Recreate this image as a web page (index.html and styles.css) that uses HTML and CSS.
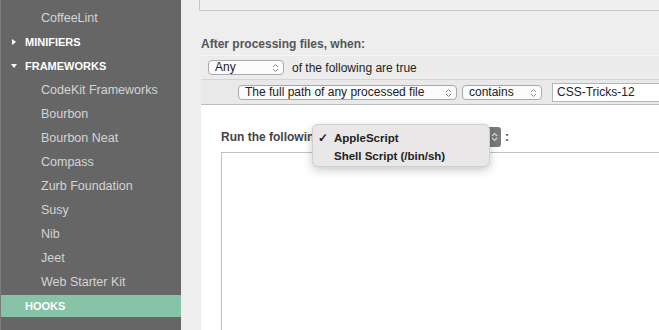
FILE: index.html
```html
<!DOCTYPE html>
<html lang="en">
<head>
    <meta charset="UTF-8">
    <title>CodeKit Hooks</title>
    <link rel="stylesheet" href="styles.css">
</head>
<body>

    <div class="sidebar">
        <div class="item sub">CoffeeLint</div>
        <div class="item head"><span class="arrow right"></span>MINIFIERS</div>
        <div class="item head"><span class="arrow down"></span>FRAMEWORKS</div>
        <div class="item sub">CodeKit Frameworks</div>
        <div class="item sub">Bourbon</div>
        <div class="item sub">Bourbon Neat</div>
        <div class="item sub">Compass</div>
        <div class="item sub">Zurb Foundation</div>
        <div class="item sub">Susy</div>
        <div class="item sub">Nib</div>
        <div class="item sub">Jeet</div>
        <div class="item sub">Web Starter Kit</div>
        <div class="item head active">HOOKS</div>
    </div>

    <div class="main">
        <div class="top-box"></div>

        <div class="section-title">After processing files, when:</div>

        <div class="rules">
            <div class="rule-row first">
                <div class="select sel-any">Any<span class="stepper"><svg width="7" height="10" viewBox="0 0 7 10"><path d="M1 4 L3.5 1.5 L6 4 M1 6 L3.5 8.5 L6 6" fill="none" stroke="#8a8a8a" stroke-width="1"/></svg></span></div>
                <span class="rule-text">of the following are true</span>
            </div>
            <div class="rule-row second">
                <div class="select sel-path">The full path of any processed file<span class="stepper"><svg width="7" height="10" viewBox="0 0 7 10"><path d="M1 4 L3.5 1.5 L6 4 M1 6 L3.5 8.5 L6 6" fill="none" stroke="#8a8a8a" stroke-width="1"/></svg></span></div>
                <div class="select sel-contains">contains<span class="stepper"><svg width="7" height="10" viewBox="0 0 7 10"><path d="M1 4 L3.5 1.5 L6 4 M1 6 L3.5 8.5 L6 6" fill="none" stroke="#8a8a8a" stroke-width="1"/></svg></span></div>
                <div class="text-field">CSS-Tricks-12</div>
            </div>
        </div>

        <div class="script-area">
            <div class="run-line">
                <span class="run-label">Run the following script</span>
                <span class="dark-select"><svg width="7" height="10" viewBox="0 0 7 10"><path d="M1 4 L3.5 1.5 L6 4 M1 6 L3.5 8.5 L6 6" fill="none" stroke="#ddd" stroke-width="1.2"/></svg></span>
                <span class="colon">:</span>
            </div>
            <div class="script-box"></div>

            <div class="popup">
                <div class="popup-item"><span class="check">&#10003;</span>AppleScript</div>
                <div class="popup-item"><span class="check"></span>Shell Script (/bin/sh)</div>
            </div>
        </div>
    </div>

</body>
</html>
```

FILE: styles.css
```css
body {
    margin: 0;
    font-family: "Liberation Sans", Arial, sans-serif;
    display: flex;
    height: 330px;
    overflow: hidden;
    background: #eeeeee;
}
.sidebar {
    width: 180px;
    flex-shrink: 0;
    background: #666666;
    border-left: 1px solid #7c7c7c;
    padding-top: 6px;
}
.item {
    height: 24px;
    display: flex;
    align-items: center;
}
.sub {
    padding-left: 40px;
    font-size: 12.5px;
    color: #d4d4d4;
}
.head {
    padding-left: 24px;
    font-size: 11px;
    font-weight: bold;
    color: #ffffff;
    position: relative;
}
.arrow {
    position: absolute;
    width: 0;
    height: 0;
}
.arrow.right {
    left: 11px;
    border-top: 3px solid transparent;
    border-bottom: 3px solid transparent;
    border-left: 4px solid #ffffff;
}
.arrow.down {
    left: 10px;
    border-left: 3px solid transparent;
    border-right: 3px solid transparent;
    border-top: 4px solid #ffffff;
}
.active {
    background: #86c3a8;
    height: 22px;
    margin-top: 1px;
}
.main {
    flex: 1;
    padding-left: 20px;
    display: flex;
    flex-direction: column;
    min-width: 0;
    height: 330px;
    overflow: hidden;
}
.main > div {
    flex-shrink: 0;
}
.top-box {
    height: 10px;
    margin-left: -2px;
    border-left: 1px solid #c6c6c6;
    border-bottom: 1px solid #c6c6c6;
}
.section-title {
    margin-top: 26px;
    height: 18px;
    font-size: 12px;
    font-weight: bold;
    color: #555555;
}
.rule-row {
    display: flex;
    align-items: center;
    font-size: 12px;
    color: #222;
}
.rule-row.first {
    height: 23px;
    border-top: 1px solid #f8f8f8;
    border-bottom: 1px solid #d4d4d4;
    background: #ececec;
    padding-left: 7px;
}
.rule-row.second {
    height: 24px;
    border-bottom: 1px solid #bcbcbc;
    background: #e9e9e9;
    padding-left: 37px;
}
.select {
    height: 13px;
    border: 1px solid #a9a9a9;
    border-radius: 4px;
    background: #fbfbfb;
    font-size: 12px;
    line-height: 13px;
    color: #222;
    padding-left: 6px;
    position: relative;
}
.stepper {
    position: absolute;
    right: 4px;
    top: 2px;
    line-height: 0;
}
.sel-any {
    width: 68px;
}
.rule-text {
    margin-left: 8px;
}
.sel-path {
    width: 211px;
}
.sel-contains {
    width: 72px;
    margin-left: 5px;
}
.text-field {
    margin-left: 10px;
    flex: 1;
    height: 17px;
    border: 1px solid #b5b5b5;
    border-right: none;
    background: #ffffff;
    font-size: 12px;
    line-height: 17px;
    padding-left: 4px;
    color: #222;
}
.script-area {
    flex: 1;
    background: #ffffff;
    padding-left: 20px;
    position: relative;
}
.run-line {
    display: flex;
    align-items: center;
    height: 20px;
    margin-top: 22px;
    font-size: 12px;
    font-weight: bold;
    color: #444;
}
.run-label {
    width: 91px;
    margin-right: 176px;
    white-space: nowrap;
    overflow: hidden;
}
.dark-select {
    width: 13px;
    height: 20px;
    background: #7a7a7a;
    border-radius: 0 3px 3px 0;
    display: flex;
    align-items: center;
    justify-content: center;
}
.colon {
    margin-left: 4px;
}
.script-box {
    margin-top: 5px;
    height: 200px;
    border: 1px solid #c2c2c2;
    border-right: none;
}
.popup {
    position: absolute;
    left: 111px;
    top: 19px;
    width: 178px;
    height: 43px;
    background: #e9e7e7;
    border: 1px solid #d0cece;
    border-radius: 6px;
    box-shadow: 0 3px 10px rgba(0, 0, 0, 0.22);
    box-sizing: border-box;
    padding-top: 4px;
}
.popup-item {
    height: 18px;
    display: flex;
    align-items: center;
    font-size: 11.5px;
    font-weight: bold;
    color: #222;
}
.check {
    width: 21px;
    padding-left: 5px;
    box-sizing: border-box;
    font-size: 12px;
}
```
